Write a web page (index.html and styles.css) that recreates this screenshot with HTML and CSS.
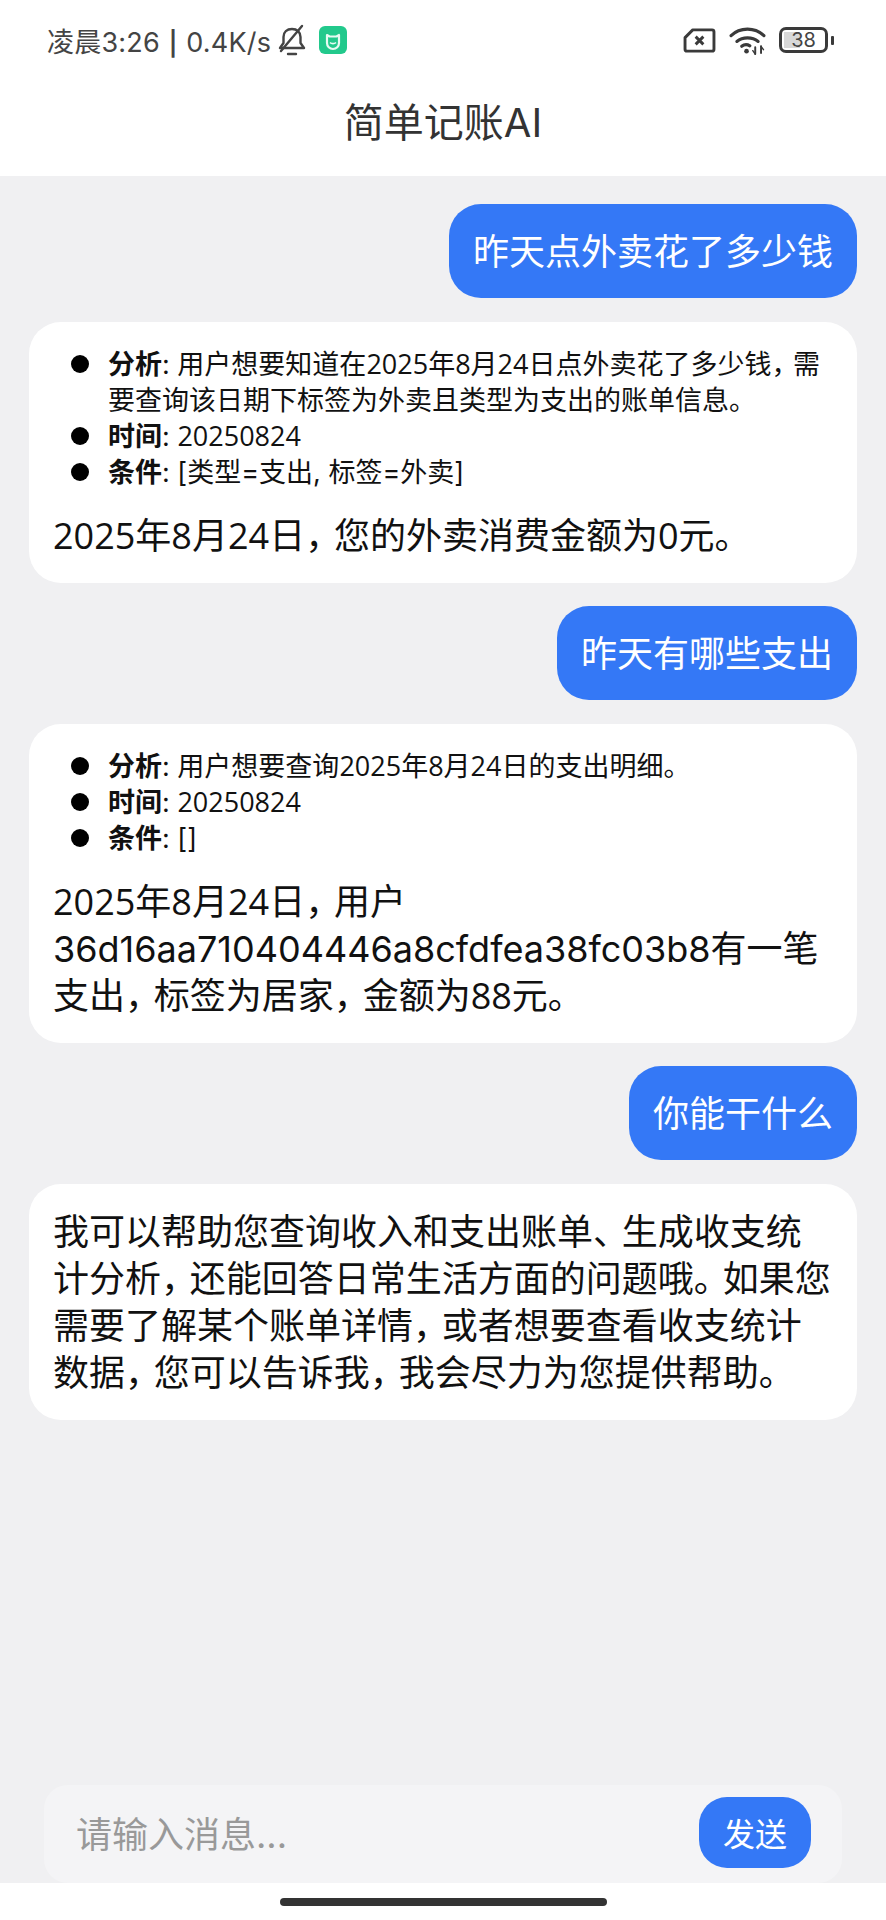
FILE: index.html
```html
<!DOCTYPE html>
<html lang="zh-CN">
<head>
<meta charset="utf-8">
<title>简单记账AI</title>
<link rel="stylesheet" href="styles.css">
</head>
<body>
<div class="app">
  <div class="status">
    <div class="status-left">
      <span class="status-text">凌晨3:26 <b class="sep">|</b> 0.4K/s</span>
      <svg class="bell" viewBox="0 0 30 32" fill="none" stroke="#444" stroke-width="2.4" stroke-linejoin="round" stroke-linecap="round"><path d="M3 24h24l-3.500-5V13C23.500 8 20 5 15 5S6.500 8 6.500 13v6z"/><path d="M4 27L25 2"/><path d="M11 30h8"/></svg>
      <svg class="mi" viewBox="0 0 28 28"><rect width="28" height="28" rx="6" fill="#22c98c"/><path d="M8 9l2.500 1.500h7L20 9v8a6 6 0 0 1-12 0z" fill="none" stroke="#e8fbf3" stroke-width="2.200" stroke-linejoin="round"/><path d="M11 16.500c1.500 1.500 4.500 1.500 6 0" fill="none" stroke="#e8fbf3" stroke-width="1.600"/></svg>
    </div>
    <div class="status-right">
      <svg class="sim" viewBox="0 0 34 28" fill="none"><path d="M10 3h20a2 2 0 0 1 2 2v18a2 2 0 0 1-2 2H4a2 2 0 0 1-2-2V11z" stroke="#3a3a3a" stroke-width="3" stroke-linejoin="round"/><path d="M13 10l8 8M21 10l-8 8" stroke="#3a3a3a" stroke-width="3"/></svg>
      <svg class="wifi" viewBox="0 0 38 30" fill="none" stroke="#3a3a3a" stroke-linecap="round"><path d="M2 10C11 1 27 1 36 10" stroke-width="3.200"/><path d="M8 16c6-5 16-5 22 0" stroke-width="3.200"/><path d="M13 21c2.500-2 6-2 8.500-.5" stroke-width="3.200"/><circle cx="18" cy="26" r="2.400" fill="#3a3a3a" stroke="none"/><path d="M27 22v7M33 21v7" stroke-width="2"/><path d="M24.500 25.500l2.500 3.500M35.500 24.500L33 21" stroke-width="1.500"/></svg>
      <div class="battery"><div class="battery-body"><span class="battery-fill"></span><span class="battery-num">38</span></div><span class="battery-tip"></span></div>
    </div>
  </div>
  <header class="title">简单记账AI</header>
  <main class="messages">
    <div class="bubble user">昨天点外卖花了多少钱</div>
    <div class="bubble bot">
      <ul class="meta">
        <li><b>分析</b>: 用户想要知道在<span class="num">2025</span>年<span class="num">8</span>月<span class="num">24</span>日点外卖花了多少钱<span class="pc">，</span>需要查询该日期下标签为外卖且类型为支出的账单信息。</li>
        <li><b>时间</b>: <span class="num">20250824</span></li>
        <li><b>条件</b>: [类型=支出, 标签=外卖]</li>
      </ul>
      <p><span class="num">2025</span>年<span class="num">8</span>月<span class="num">24</span>日<span class="pc">，</span>您的外卖消费金额为<span class="num">0</span>元。</p>
    </div>
    <div class="bubble user">昨天有哪些支出</div>
    <div class="bubble bot">
      <ul class="meta">
        <li><b>分析</b>: 用户想要查询<span class="num">2025</span>年<span class="num">8</span>月<span class="num">24</span>日的支出明细。</li>
        <li><b>时间</b>: <span class="num">20250824</span></li>
        <li><b>条件</b>: []</li>
      </ul>
      <p><span class="num">2025</span>年<span class="num">8</span>月<span class="num">24</span>日<span class="pc">，</span>用户36d16aa710404446a8cfdfea38fc03b8有一笔支出<span class="pc">，</span>标签为居家<span class="pc">，</span>金额为<span class="num">88</span>元。</p>
    </div>
    <div class="bubble user">你能干什么</div>
    <div class="bubble bot">
      <p>我可以帮助您查询收入和支出账单<span class="pc">、</span>生成收支统计分析<span class="pc">，</span>还能回答日常生活方面的问题哦<span class="pc">。</span>如果您需要了解某个账单详情<span class="pc">，</span>或者想要查看收支统计数据<span class="pc">，</span>您可以告诉我<span class="pc">，</span>我会尽力为您提供帮助。</p>
    </div>
  </main>
  <div class="composer-wrap">
    <div class="composer">
      <span class="placeholder">请输入消息...</span>
      <button class="send">发送</button>
    </div>
  </div>
  <div class="home"><span class="home-bar"></span></div>
</div>
</body>
</html>
```
FILE: styles.css
```css
* { box-sizing: border-box; }
html, body { margin: 0; padding: 0; }
body { font-family: Inter, "Noto Sans CJK SC", "Noto Sans", sans-serif; background: #fff; }
.app { width: 886px; height: 1920px; display: flex; flex-direction: column; overflow: hidden; }
.status { height: 80px; display: flex; justify-content: space-between; align-items: center; padding: 0 52px 0 47px; color: #444; font-size: 27px; background: #fff; }
.status-left, .status-right { display: flex; align-items: center; }
.status-text { white-space: nowrap; word-spacing: 1px; letter-spacing: 0.2px; }
.sep { font-weight: 600; font-size: 24px; }
.bell { width: 30px; height: 32px; margin-left: 6px; }
.mi { width: 28px; height: 28px; margin-left: 12px; }
.status-right { gap: 13px; }
.sim { width: 33px; height: 27px; }
.wifi { width: 37px; height: 29px; }
.battery { display: flex; align-items: center; gap: 3px; }
.battery-body { width: 49px; height: 26px; border: 3px solid #3a3a3a; border-radius: 7px; position: relative; display: flex; align-items: center; justify-content: center; overflow: hidden; }
.battery-fill { position: absolute; left: 2px; top: 2px; bottom: 2px; width: 16px; background: #d8d8d8; }
.battery-num { position: relative; font-size: 20px; line-height: 20px; color: #444; }
.battery-tip { width: 3px; height: 9px; background: #3a3a3a; border-radius: 1px; }
.title { height: 96px; display: flex; align-items: center; justify-content: center; font-size: 40px; color: #333; background: #fff; padding-bottom: 16px; }
.messages { flex: 1; background: #f0f0f2; padding: 28px 29px 0; display: flex; flex-direction: column; gap: 23.500px; min-height: 0; }
.bubble { font-size: 36px; line-height: 47px; border-radius: 32px; }
.user { align-self: flex-end; background: #3478f6; color: #fff; padding: 25px 24px 22px; }
.bot { background: #fff; color: #111; padding: 25px 24px 23px; }
.bot p { margin: 0; }
.pc { font-feature-settings: "halt"; letter-spacing: 0.3em; }
.num { font-family: "Open Sans", Inter, sans-serif; line-height: 0; }
.meta { margin: 0 0 22px; padding: 0 0 0 55px; list-style: none; font-size: 27px; line-height: 36px; }
.meta li { position: relative; }
.meta li::before { content: ""; position: absolute; left: -37px; top: 8px; width: 18px; height: 18px; border-radius: 50%; background: #000; }
.meta b { font-weight: 700; }
.composer-wrap { background: #f0f0f2; padding: 0 44px 0 44px; height: 98px; }
.composer { height: 98px; background: #f4f4f6; border-radius: 24px; display: flex; align-items: center; justify-content: space-between; padding: 0 31px 4px 32px; }
.placeholder { font-size: 36px; color: #999; }
.send { width: 112px; height: 71px; border: 0; border-radius: 28px; background: #3478f6; color: #fff; font: inherit; font-size: 32px; padding: 0; }
.home { height: 37px; background: #fff; display: flex; justify-content: center; padding-top: 15px; }
.home-bar { width: 327px; height: 8px; border-radius: 4px; background: #333; }
```
